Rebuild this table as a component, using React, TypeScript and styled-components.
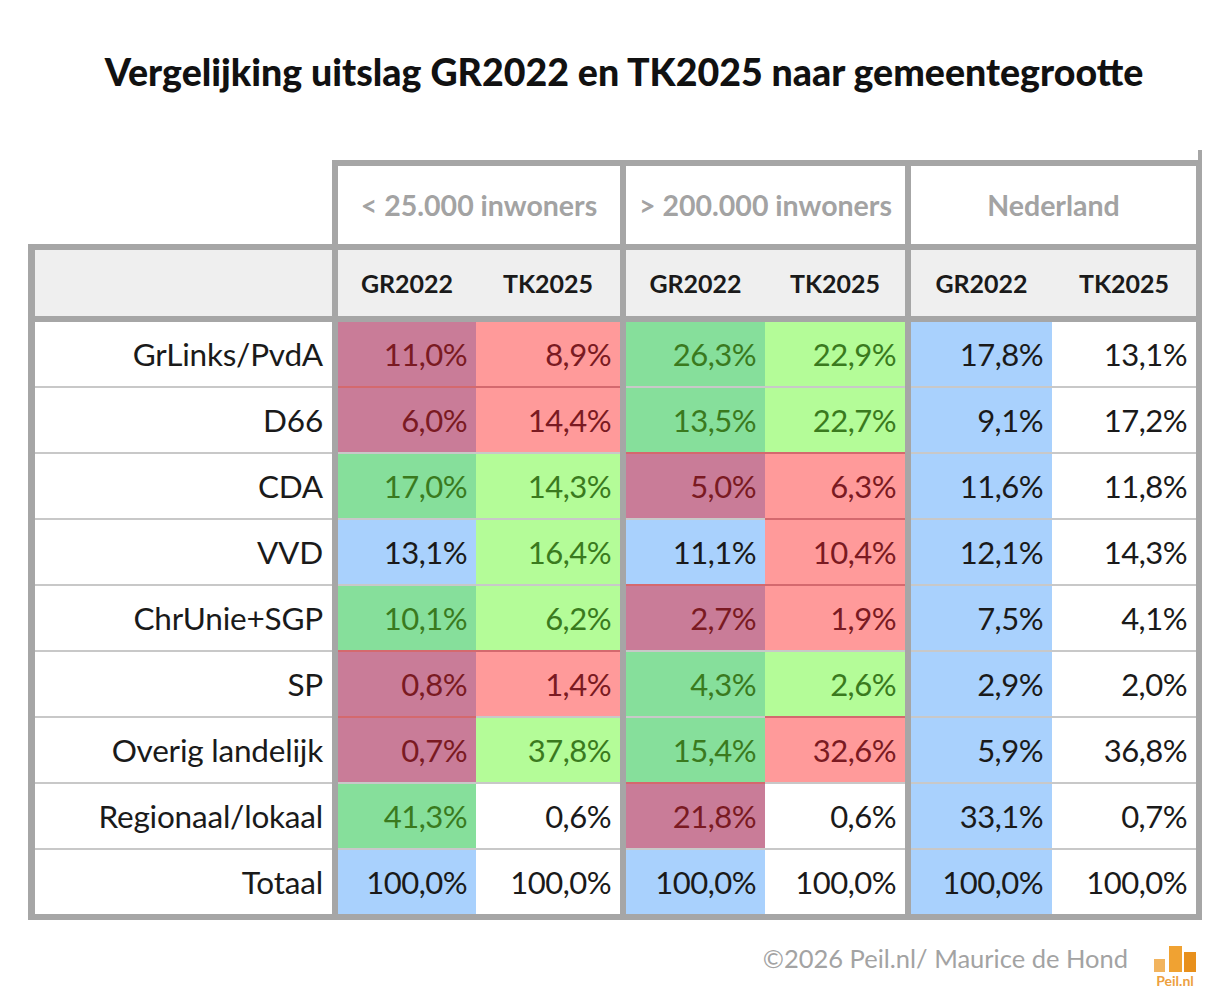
import React from "react";
import styled, { createGlobalStyle } from "styled-components";

const GlobalStyle = createGlobalStyle`
  html, body {
    margin: 0;
    padding: 0;
    background: #fff;
  }
  body {
    font-family: Lato, "Noto Sans", sans-serif;
    color: #1a1a1a;
  }
`;

const BORDER = "#a6a6a6";

type Kind = "R" | "S" | "G" | "L" | "B" | "W";

const palette: Record<Kind, { bg: string; fg: string; line: string }> = {
  R: { bg: "#c97c98", fg: "#7a1a22", line: "#d4696e" },
  S: { bg: "#ff9a9a", fg: "#7a1a22", line: "#d4696e" },
  G: { bg: "#86df9b", fg: "#3a7a1e", line: "#c8c8c8" },
  L: { bg: "#b4fc98", fg: "#3a7a1e", line: "#c8c8c8" },
  B: { bg: "#a9d1fd", fg: "#1a1a1a", line: "#c8c8c8" },
  W: { bg: "#ffffff", fg: "#1a1a1a", line: "#c8c8c8" },
};

const groupWidths = [282, 279, 285];
const colWidths = [
  [138, 144],
  [139, 140],
  [141, 144],
];

const rows: { label: string; values: string[]; kinds: Kind[] }[] = [
  { label: "GrLinks/PvdA", values: ["11,0%", "8,9%", "26,3%", "22,9%", "17,8%", "13,1%"], kinds: ["R", "S", "G", "L", "B", "W"] },
  { label: "D66", values: ["6,0%", "14,4%", "13,5%", "22,7%", "9,1%", "17,2%"], kinds: ["R", "S", "G", "L", "B", "W"] },
  { label: "CDA", values: ["17,0%", "14,3%", "5,0%", "6,3%", "11,6%", "11,8%"], kinds: ["G", "L", "R", "S", "B", "W"] },
  { label: "VVD", values: ["13,1%", "16,4%", "11,1%", "10,4%", "12,1%", "14,3%"], kinds: ["B", "L", "B", "S", "B", "W"] },
  { label: "ChrUnie+SGP", values: ["10,1%", "6,2%", "2,7%", "1,9%", "7,5%", "4,1%"], kinds: ["G", "L", "R", "S", "B", "W"] },
  { label: "SP", values: ["0,8%", "1,4%", "4,3%", "2,6%", "2,9%", "2,0%"], kinds: ["R", "S", "G", "L", "B", "W"] },
  { label: "Overig landelijk", values: ["0,7%", "37,8%", "15,4%", "32,6%", "5,9%", "36,8%"], kinds: ["R", "L", "G", "S", "B", "W"] },
  { label: "Regionaal/lokaal", values: ["41,3%", "0,6%", "21,8%", "0,6%", "33,1%", "0,7%"], kinds: ["G", "W", "R", "W", "B", "W"] },
  { label: "Totaal", values: ["100,0%", "100,0%", "100,0%", "100,0%", "100,0%", "100,0%"], kinds: ["B", "W", "B", "W", "B", "W"] },
];

const Page = styled.div`
  width: 1220px;
  height: 1000px;
  display: flex;
  flex-direction: column;
`;

const Title = styled.h1`
  margin: 0;
  padding: 49px 0 0 28px;
  height: 110px;
  box-sizing: border-box;
  text-align: center;
  font-family: Lato, sans-serif;
  font-weight: 900;
  font-size: 37.5px;
  color: #111;
`;

const Table = styled.div`
  margin-left: 28px;
  width: 1174px;
  margin-top: 50px;
  display: flex;
  flex-direction: column;
`;

const GroupRow = styled.div`
  display: flex;
  margin-left: 304px;
`;

const GroupHead = styled.div<{ $w: number; $last?: boolean }>`
  position: relative;
  width: ${(p) => p.$w}px;
  height: 78px;
  border-top: 6px solid ${BORDER};
  border-left: 6px solid ${BORDER};
  border-right: ${(p) => (p.$last ? `6px solid ${BORDER}` : "none")};
  display: flex;
  align-items: center;
  justify-content: center;
  font-size: 28.5px;
  font-weight: 700;
  color: #a3a3a3;

  ${(p) =>
    p.$last &&
    `
    &::after {
      content: "";
      position: absolute;
      right: -6px;
      top: -16px;
      width: 4px;
      height: 10px;
      background: ${BORDER};
    }
  `}
`;

const HeaderRow = styled.div`
  display: flex;
  background: #efefef;
  border: 6px solid ${BORDER};
  border-left-width: 7px;
  height: 66px;
`;

const BodyFrame = styled.div`
  display: flex;
  flex-direction: column;
  border: 6px solid ${BORDER};
  border-left-width: 7px;
  border-top: none;
`;

const Row = styled.div`
  display: flex;
  height: 64px;
  & + & {
    height: 66px;
  }
`;

const LabelCell = styled.div`
  width: 297px;
  box-sizing: border-box;
  padding-right: 9px;
  display: flex;
  align-items: center;
  justify-content: flex-end;
  font-size: 31.5px;
  letter-spacing: -0.2px;
  color: #1a1a1a;
  ${Row} + ${Row} & {
    border-top: 2px solid #c8c8c8;
  }
`;

const Group = styled.div<{ $w: number }>`
  width: ${(p) => p.$w}px;
  border-left: 6px solid ${BORDER};
  display: flex;
`;

const SubHead = styled.div<{ $w: number }>`
  width: ${(p) => p.$w}px;
  display: flex;
  align-items: center;
  justify-content: center;
  font-size: 25px;
  font-weight: 700;
  color: #1a1a1a;
`;

const Cell = styled.div<{ $w: number; $kind: Kind }>`
  width: ${(p) => p.$w}px;
  box-sizing: border-box;
  padding-right: 9px;
  display: flex;
  align-items: center;
  justify-content: flex-end;
  font-size: 31px;
  letter-spacing: -0.5px;
  background: ${(p) => palette[p.$kind].bg};
  color: ${(p) => palette[p.$kind].fg};
  ${Row} + ${Row} & {
    border-top: 2px solid ${(p) => palette[p.$kind].line};
  }
`;

const Footer = styled.div`
  display: flex;
  justify-content: flex-end;
  align-items: flex-start;
  gap: 24px;
  width: 1198px;
  margin-top: 26px;
`;

const Credit = styled.div`
  font-size: 25.5px;
  color: #a3a3a3;
  line-height: 28px;
  margin-top: -2px;
`;

const Logo = styled.div`
  display: flex;
  flex-direction: column;
  align-items: center;
  width: 46px;
`;

const LogoText = styled.span`
  font-size: 14px;
  font-weight: 700;
  color: #eda040;
  line-height: 14px;
  margin-top: 2px;
`;

export default function App() {
  return (
    <>
      <GlobalStyle />
      <Page>
        <Title>Vergelijking uitslag GR2022 en TK2025 naar gemeentegrootte</Title>
        <Table>
          <GroupRow>
            <GroupHead $w={groupWidths[0]}>&lt; 25.000 inwoners</GroupHead>
            <GroupHead $w={groupWidths[1]}>&gt; 200.000 inwoners</GroupHead>
            <GroupHead $w={groupWidths[2]} $last>
              Nederland
            </GroupHead>
          </GroupRow>
          <HeaderRow>
            <LabelCell />
            {colWidths.map((cols, g) => (
              <Group key={g} $w={groupWidths[g]}>
                <SubHead $w={cols[0]}>GR2022</SubHead>
                <SubHead $w={cols[1]}>TK2025</SubHead>
              </Group>
            ))}
          </HeaderRow>
          <BodyFrame>
            {rows.map((r) => (
              <Row key={r.label}>
                <LabelCell>{r.label}</LabelCell>
                {colWidths.map((cols, g) => (
                  <Group key={g} $w={groupWidths[g]}>
                    {cols.map((w, i) => {
                      const idx = g * 2 + i;
                      return (
                        <Cell key={i} $w={w} $kind={r.kinds[idx]}>
                          {r.values[idx]}
                        </Cell>
                      );
                    })}
                  </Group>
                ))}
              </Row>
            ))}
          </BodyFrame>
        </Table>
        <Footer>
          <Credit>©2026 Peil.nl/ Maurice de Hond</Credit>
          <Logo>
            <svg width="44" height="26" viewBox="0 0 44 26">
              <rect x="1" y="13" width="11" height="13" fill="#f2b45e" />
              <rect x="16" y="0" width="13" height="26" fill="#f0a232" />
              <rect x="31" y="6" width="12" height="20" fill="#e8901c" />
            </svg>
            <LogoText>Peil.nl</LogoText>
          </Logo>
        </Footer>
      </Page>
    </>
  );
}
